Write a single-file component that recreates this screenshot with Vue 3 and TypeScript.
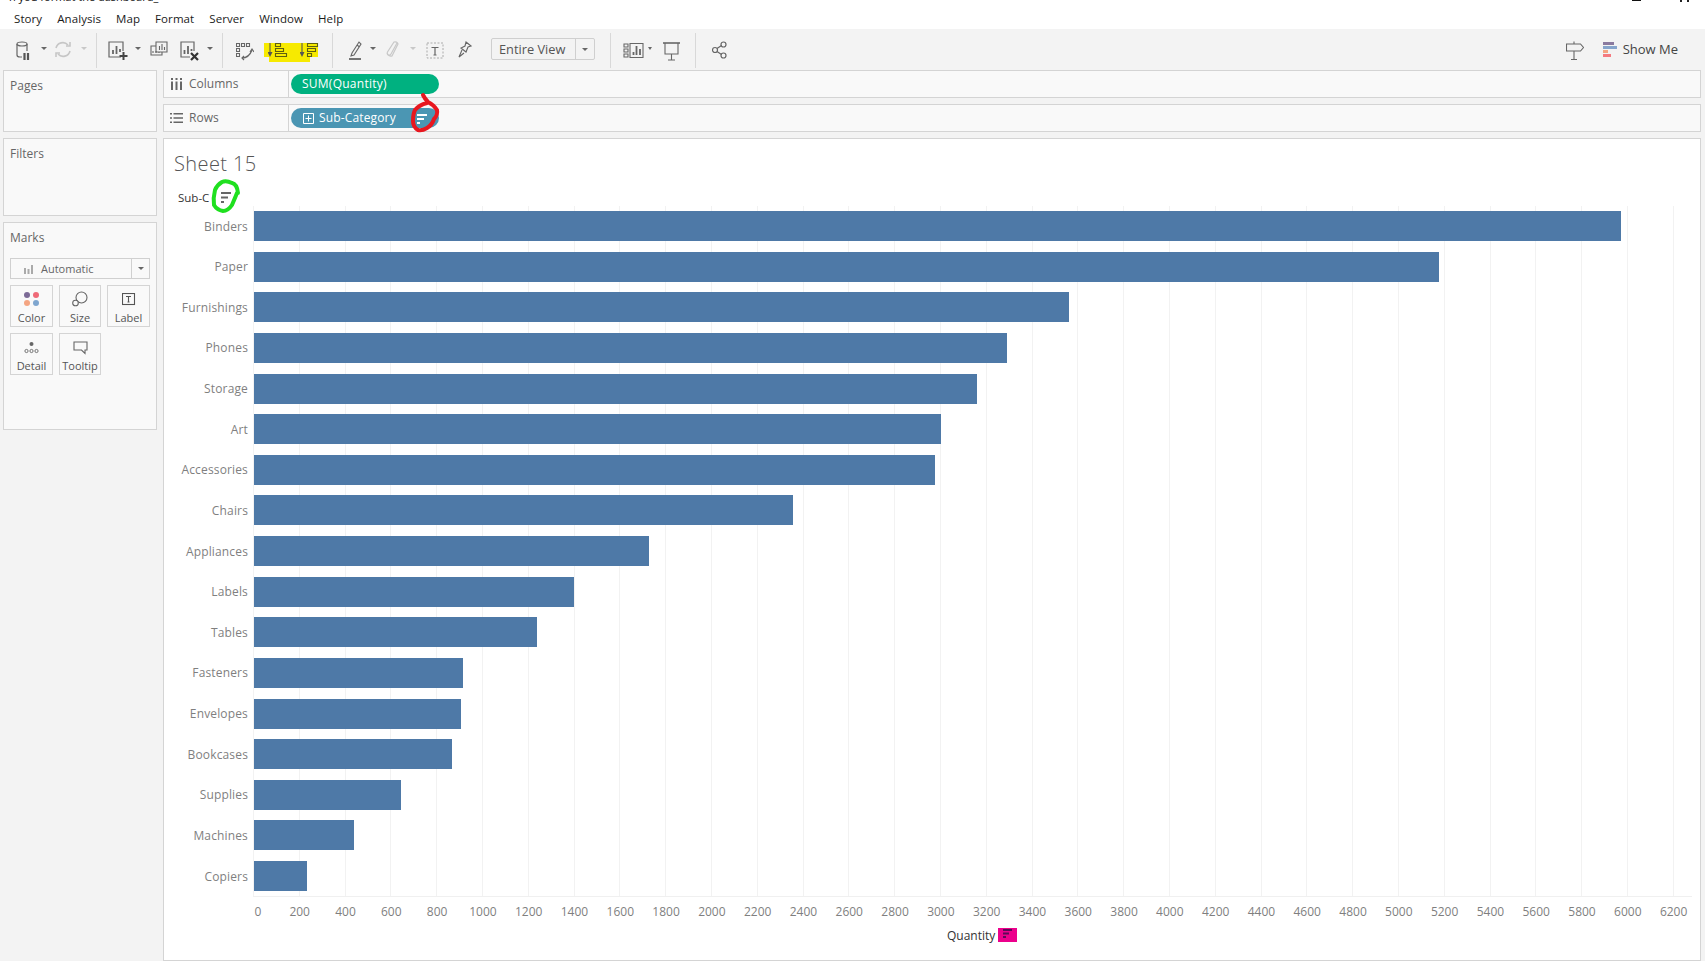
<script setup lang="ts">
interface Row { name: string; value: number }
const rows: Row[] = [
  { name: 'Binders', value: 5974 },
  { name: 'Paper', value: 5178 },
  { name: 'Furnishings', value: 3563 },
  { name: 'Phones', value: 3289 },
  { name: 'Storage', value: 3158 },
  { name: 'Art', value: 3000 },
  { name: 'Accessories', value: 2976 },
  { name: 'Chairs', value: 2356 },
  { name: 'Appliances', value: 1725 },
  { name: 'Labels', value: 1400 },
  { name: 'Tables', value: 1238 },
  { name: 'Fasteners', value: 914 },
  { name: 'Envelopes', value: 906 },
  { name: 'Bookcases', value: 866 },
  { name: 'Supplies', value: 642 },
  { name: 'Machines', value: 437 },
  { name: 'Copiers', value: 231 },
]
const pxPerUnit = 0.22885
const ticks: number[] = Array.from({ length: 32 }, (_, i) => i * 200)
const barWidth = (v: number): string => `${(v * pxPerUnit).toFixed(1)}px`
const menu: string[] = ['Story', 'Analysis', 'Map', 'Format', 'Server', 'Window', 'Help']
</script>

<template>
  <div class="app">
    <div class="titlebar">
      <span class="doc-title">n you format the dashboard_</span>
      <span class="win-min"></span>
      <svg class="win-close" width="10" height="2" viewBox="0 0 10 2"><path d="M0 0h2v2H0zM7 0h2v2H7z" fill="#222" /></svg>
    </div>
    <nav class="menubar">
      <span v-for="m in menu" :key="m">{{ m }}</span>
    </nav>

    <div class="toolbar">
      <svg class="i" width="16" height="24" viewBox="0 0 16 24" fill="none" stroke="#666" stroke-width="1.2">
        <ellipse cx="6" cy="6" rx="5" ry="2" />
        <path d="M1 6v11q0 2 3 2h2M11 6v7" />
        <path d="M8.5 15v7M12 15v7" stroke-width="2.2" stroke="#555" />
      </svg>
      <span class="caret g9"></span>
      <svg class="i g7" width="18" height="24" viewBox="0 0 18 24" fill="none" stroke="#c6c6c6" stroke-width="1.6">
        <path d="M2 10a7 7 0 0 1 12-3M16 13a7 7 0 0 1-12 3" />
        <path d="M12 8h4V4M6 15H2v4" />
      </svg>
      <span class="caret light g9"></span>
      <span class="sep g9"></span>

      <svg class="i g11" width="20" height="24" viewBox="0 0 20 24" fill="none" stroke="#666" stroke-width="1.2">
        <path d="M13 19H1V4h14v9" />
        <path d="M5 16v-4M8.5 16V8M12 14v-3" stroke-width="1.8" />
        <path d="M15.500 14v8M11.500 18h8" stroke="#444" stroke-width="2" />
      </svg>
      <span class="caret g7"></span>
      <svg class="i g9" width="18" height="24" viewBox="0 0 18 24" fill="none" stroke="#666" stroke-width="1.1">
        <path d="M6 4h11v10H6zM6 8H1v9h11v-3" />
        <path d="M9.500 12V8M12 12V6M14.500 12V9M3 15v-2M6 15v-2M9 15v-1" />
      </svg>
      <svg class="i g12" width="19" height="24" viewBox="0 0 19 24" fill="none" stroke="#666" stroke-width="1.2">
        <path d="M10 19H1V4h13v9" />
        <path d="M4.500 16v-4M8 16V8M11.500 13v-2" stroke-width="1.800" />
        <path d="M11 15l7 7M18 15l-7 7" stroke="#333" stroke-width="2.200" />
      </svg>
      <span class="caret g8"></span>
      <span class="sep g9"></span>

      <svg class="i g13" width="18" height="24" viewBox="0 0 18 24" fill="none" stroke="#666" stroke-width="1.1">
        <path d="M.5 5.500h3v3h-3zM5.500 5.500h3v3h-3zM10.500 5.500h3v3h-3zM.5 10.500h3v3h-3zM.5 15.500h3v3h-3z" />
        <path d="M6 20q7 0 10-8" stroke-width="1.300" />
        <path d="M14 14l2-3 2 3M8 18l-2 2 2 2" stroke-width="1.200" />
      </svg>
      <div class="sort-group">
        <svg class="hl" width="56" height="20" viewBox="0 0 56 20"><path d="M0 0h54v14h-8v5H5v-5H0z" fill="#f7ea00" /></svg>
        <svg class="i sort" width="20" height="24" viewBox="0 0 20 24" fill="none" stroke="#5f5f10" stroke-width="1.100">
          <path d="M2 5v10" stroke="#555" />
          <path d="M-.5 14h5L2 19z" fill="#555" stroke="none" />
          <path d="M7.500 5.500h5v3h-5zM7.500 10.500h8v3h-8zM7.500 15.500h11v3h-11z" />
        </svg>
        <svg class="i sort g12" width="20" height="24" viewBox="0 0 20 24" fill="none" stroke="#5f5f10" stroke-width="1.100">
          <path d="M2 5v10" stroke="#555" />
          <path d="M-.5 14h5L2 19z" fill="#555" stroke="none" />
          <path d="M7.500 5.500h10v3h-10zM7.500 10.500h8v3h-8zM7.500 15.500h4v3h-4z" />
        </svg>
      </div>
      <span class="sep g12"></span>

      <svg class="i g16" width="13" height="24" viewBox="0 0 13 24" fill="none" stroke="#666" stroke-width="1.100">
        <path d="M3 15l-1 3 3-1 7-11-2-2zM8 7l2.500 2" />
        <path d="M0 21h12" stroke-width="1.800" />
      </svg>
      <span class="caret g8"></span>
      <svg class="i g10" width="13" height="24" viewBox="0 0 13 24" fill="none" stroke="#c8c8c8" stroke-width="1.200">
        <path d="M11 5l-6 11a2 2 0 0 1-3.500-2L8 4a3 3 0 0 1 4 2L6 18a4 4 0 0 1-5-3" />
      </svg>
      <span class="caret light g11"></span>
      <svg class="i g10" width="18" height="24" viewBox="0 0 18 24" fill="none">
        <rect x="1" y="5" width="16" height="15" stroke="#aaa" stroke-dasharray="2 1.500" />
        <path d="M5.500 9.500h7M9 9.500v7.500M7.500 17h3" stroke="#666" stroke-width="1.200" />
      </svg>
      <svg class="i g14" width="14" height="24" viewBox="0 0 14 24" fill="none" stroke="#666" stroke-width="1.100">
        <path d="M8 4l5 4-3 1-2 5-5-4 4-2zM4 12l-3 7 5-4" />
      </svg>

      <div class="zoom-select">
        <span class="zs-text">Entire View</span>
        <span class="zs-arrow"><span class="caret dark"></span></span>
      </div>
      <span class="sep g15"></span>

      <svg class="i g12" width="21" height="24" viewBox="0 0 21 24" fill="none" stroke="#666" stroke-width="1.100">
        <path d="M1 6h4v3H1zM1 11h4v3H1zM1 16h4v3H1zM7 5.500h13v14H7z" />
        <path d="M10.500 17v-3M13.500 17V8M17 17v-6" stroke-width="1.800" />
      </svg>
      <span class="caret small g4"></span>
      <svg class="i g11" width="18" height="24" viewBox="0 0 18 24" fill="none" stroke="#666" stroke-width="1.100">
        <path d="M0 5h17" stroke-width="1.600" />
        <path d="M2 5v11h13V5M8.500 16v6M5 22h7" />
      </svg>
      <span class="sep g14"></span>

      <svg class="i g16" width="15" height="24" viewBox="0 0 15 24" fill="none" stroke="#666" stroke-width="1.200">
        <circle cx="3" cy="12" r="2.500" /><circle cx="11.500" cy="6.500" r="2.500" /><circle cx="11.500" cy="17.500" r="2.500" />
        <path d="M5 10.500l4.500-3M5 13.500l4.500 3" />
      </svg>

      <div class="toolbar-right">
        <svg class="i" width="18" height="24" viewBox="0 0 18 24" fill="none" stroke="#666" stroke-width="1.100">
          <path d="M.5 6h14l3 3.500-3 3.500H.5zM8 3.500V6M8 13v9M5 21.500h6" />
        </svg>
        <svg class="i g19" width="14" height="24" viewBox="0 0 14 24">
          <rect x="0" y="4" width="11" height="3" fill="#8a7a9f" />
          <rect x="0" y="8" width="14" height="3" fill="#86a5cc" />
          <rect x="0" y="12" width="5" height="3" fill="#f4a582" />
          <rect x="0" y="16" width="8" height="3" fill="#f47a80" />
        </svg>
        <span class="showme">Show Me</span>
      </div>
    </div>

    <div class="body">
      <aside class="side">
        <section class="panel pages"><h3>Pages</h3></section>
        <section class="panel filters"><h3>Filters</h3></section>
        <section class="panel marks">
          <h3>Marks</h3>
          <div class="marks-select">
            <svg width="11" height="12" viewBox="0 0 11 12"><path d="M1 5h2v6H1zM4.500 6h2v5h-2zM8 2h2v9H8z" fill="#aaa" /></svg>
            <span class="ms-text">Automatic</span>
            <span class="ms-arrow"><span class="caret dark"></span></span>
          </div>
          <div class="mark-grid">
            <div class="mark-card">
              <svg width="18" height="16" viewBox="0 0 18 16">
                <circle cx="4" cy="4" r="3" fill="#7c6a96" /><circle cx="13" cy="4" r="3" fill="#ef6a78" />
                <circle cx="4" cy="12" r="3" fill="#f4a582" /><circle cx="13" cy="12" r="3" fill="#7fa6cf" />
              </svg>
              <span>Color</span>
            </div>
            <div class="mark-card">
              <svg width="16" height="16" viewBox="0 0 16 16" fill="none" stroke="#666" stroke-width="1.100">
                <circle cx="9.500" cy="6.500" r="5.500" /><circle cx="3.500" cy="12" r="2.800" fill="#f9f9f9" />
              </svg>
              <span>Size</span>
            </div>
            <div class="mark-card">
              <svg width="14" height="14" viewBox="0 0 14 14" fill="none" stroke="#555" stroke-width="1.100">
                <rect x=".5" y=".5" width="12" height="11" />
                <path d="M4 3.500h5M6.500 3.500v5.500M5.500 9h2" />
              </svg>
              <span>Label</span>
            </div>
            <div class="mark-card">
              <svg width="15" height="14" viewBox="0 0 15 14" fill="none" stroke="#666" stroke-width=".9">
                <circle cx="7.500" cy="3" r="2" fill="#666" stroke="none" />
                <circle cx="2.500" cy="10" r="1.600" /><circle cx="7.500" cy="10" r="1.600" /><circle cx="12.500" cy="10" r="1.600" />
              </svg>
              <span>Detail</span>
            </div>
            <div class="mark-card">
              <svg width="15" height="14" viewBox="0 0 15 14" fill="none" stroke="#666" stroke-width="1.100">
                <path d="M1 1h13v8h-2v3.500L8.500 9H1z" />
              </svg>
              <span>Tooltip</span>
            </div>
          </div>
        </section>
      </aside>

      <main class="content">
        <div class="shelf">
          <div class="shelf-label">
            <svg width="13" height="12" viewBox="0 0 13 12"><path d="M1 0h2v2H1zM1 3.500h2V12H1zM5.500 0h2v2h-2zM5.500 3.500h2V12h-2zM10 0h2v2h-2zM10 3.500h2V12h-2z" fill="#666" /></svg>
            <span>Columns</span>
          </div>
          <div class="pill green"><span class="pill-text">SUM(Quantity)</span></div>
        </div>
        <div class="shelf">
          <div class="shelf-label">
            <svg width="13" height="12" viewBox="0 0 13 12"><path d="M0 1h2v1.600H0zM3.500 1H13v1.600H3.500zM0 5.200h2v1.600H0zM3.500 5.200H13v1.600H3.500zM0 9.400h2V11H0zM3.500 9.400H13V11H3.500z" fill="#666" /></svg>
            <span>Rows</span>
          </div>
          <div class="pill blue">
            <svg width="11" height="11" viewBox="0 0 11 11" fill="none" stroke="#fff"><path d="M.5.500h10v10H.5zM5.500 2.500v6M2.500 5.500h6" /></svg>
            <span class="pill-text narrow">Sub-Category</span>
            <svg class="pill-sort" width="10" height="10" viewBox="0 0 10 10" fill="#fff"><path d="M0 0h10v2H0zM0 4h7v2H0zM0 8h3v2H0z" /></svg>
          </div>
        </div>

        <section class="sheet">
          <h1 class="sheet-title">Sheet 15</h1>
          <div class="row-header">
            <span>Sub-C</span>
            <svg width="10" height="11" viewBox="0 0 10 11" fill="#666"><path d="M0 0h10v2H0zM0 4.500h7v2H0zM0 9h3v2H0z" /></svg>
          </div>
          <div class="plot">
            <div class="grid">
              <span v-for="t in ticks" :key="t" class="grid-line"></span>
            </div>
            <div v-for="r in rows" :key="r.name" class="row">
              <span class="row-name">{{ r.name }}</span>
              <span class="bar" :style="{ width: barWidth(r.value) }"></span>
            </div>
          </div>
          <div class="ticks">
            <span v-for="t in ticks" :key="t" class="tick" :class="{ first: t === 0 }">{{ t }}</span>
          </div>
          <div class="axis-title">
            <span>Quantity</span>
            <span class="axis-sort">
              <svg width="9" height="9" viewBox="0 0 9 9" fill="#5c0a58"><path d="M0 0h9v2H0zM0 3.500h6v2H0zM0 7h3v2H0z" /></svg>
            </span>
          </div>
        </section>
      </main>
    </div>

    <svg class="scribbles" width="1705" height="961" viewBox="0 0 1705 961" fill="none" stroke-linecap="round" stroke-linejoin="round">
      <path d="M423 95q2 4 5 7 6 3 9 8 1 5-3 9-2 6-7 9-5 3-9 2-5-3-5-9 0-7 2-11 4-5 12-7" stroke="#e8171f" stroke-width="4" />
      <path d="M238 193q-1-9-6-10-6-3-10-1-5 3-7 8-2 8-1 15 3 5 9 6 5 0 9-6 3-7 5-12" stroke="#1fe01f" stroke-width="4" />
    </svg>
  </div>
</template>

<style>
html, body { margin: 0; padding: 0; background: #f3f3f3; }
</style>

<style scoped>
.app {
  position: relative;
  width: 1705px;
  height: 961px;
  overflow: hidden;
  display: flex;
  flex-direction: column;
  background: #f3f3f3;
  font-family: "Open Sans", "Noto Sans", sans-serif;
  font-size: 12px;
  color: #555;
}
.titlebar {
  position: relative;
  height: 8px;
  flex: none;
  background: #fff;
  overflow: hidden;
}
.doc-title {
  display: block;
  margin-top: -12px;
  padding-left: 9px;
  font-size: 11px;
  line-height: 18px;
  color: #111;
  white-space: nowrap;
}
.win-min {
  position: absolute;
  left: 1632px;
  top: 0;
  width: 9px;
  height: 1px;
  background: #111;
}
.win-close {
  position: absolute;
  left: 1680px;
  top: 0;
}
.menubar {
  height: 21px;
  flex: none;
  display: flex;
  align-items: center;
  gap: 15px;
  padding-left: 14px;
  background: #fff;
  color: #1a1a1a;
  font-size: 11.5px;
  letter-spacing: .08px;
}
.toolbar {
  height: 41px;
  flex: none;
  box-sizing: border-box;
  display: flex;
  align-items: flex-start;
  padding: 9px 27px 0 16px;
}
.i { flex: none; display: block; }
.caret {
  flex: none;
  width: 0;
  height: 0;
  margin-top: 9px;
  border-left: 3px solid transparent;
  border-right: 3px solid transparent;
  border-top: 3px solid #666;
}
.caret.light { border-top-color: #c8c8c8; }
.caret.small { border-left-width: 2.5px; border-right-width: 2.5px; }
.caret.dark { margin-top: 0; border-top-color: #666; }
.sep {
  flex: none;
  width: 1px;
  height: 35px;
  margin-top: -5px;
  background: #d8d8d8;
}
.g4 { margin-left: 4px; }
.g7 { margin-left: 7px; }
.g8 { margin-left: 8px; }
.g9 { margin-left: 9px; }
.g10 { margin-left: 10px; }
.g11 { margin-left: 11px; }
.g12 { margin-left: 12px; }
.g13 { margin-left: 13px; }
.g14 { margin-left: 14px; }
.g15 { margin-left: 15px; }
.g16 { margin-left: 16px; }
.g19 { margin-left: 19px; }
.sort-group {
  position: relative;
  display: flex;
  margin-left: 14px;
}
.hl { position: absolute; left: -4px; top: 5px; }
.sort { position: relative; }
.zoom-select {
  flex: none;
  margin-left: 19px;
  width: 104px;
  height: 22px;
  box-sizing: border-box;
  display: flex;
  align-items: center;
  border: 1px solid #cfcfcf;
  border-radius: 2px;
  font-size: 12.800px;
  color: #555;
}
.zs-text { flex: 1; padding-left: 7px; white-space: nowrap; }
.zs-arrow {
  width: 18px;
  height: 100%;
  display: flex;
  align-items: center;
  justify-content: center;
  border-left: 1px solid #cfcfcf;
}
.toolbar-right {
  margin-left: auto;
  display: flex;
  align-items: flex-start;
}
.showme {
  margin-left: 6px;
  margin-top: 2px;
  font-size: 13px;
  line-height: 18px;
  color: #444;
  white-space: nowrap;
}
.body {
  flex: 1;
  min-height: 0;
  display: flex;
  gap: 6px;
  padding-left: 3px;
  padding-right: 4px;
}
.side {
  flex: none;
  width: 154px;
  display: flex;
  flex-direction: column;
  gap: 6px;
}
.panel {
  box-sizing: border-box;
  border: 1px solid #d4d4d4;
  background: #f9f9f9;
  padding: 7px 6px;
}
.panel h3 {
  margin: 0;
  font-size: 12px;
  font-weight: 400;
  line-height: 16px;
  color: #666;
}
.pages { height: 62px; }
.filters { height: 78px; }
.marks { height: 208px; }
.marks-select {
  margin-top: 12px;
  height: 21px;
  box-sizing: border-box;
  display: flex;
  align-items: center;
  border: 1px solid #d0d0d0;
  padding-left: 12px;
  font-size: 11px;
  color: #666;
}
.ms-text { flex: 1; margin-left: 7px; }
.ms-arrow {
  width: 17px;
  height: 100%;
  display: flex;
  align-items: center;
  justify-content: center;
  border-left: 1px solid #d0d0d0;
}
.mark-grid {
  margin-top: 6px;
  display: grid;
  grid-template-columns: 43px 42px 43px;
  column-gap: 6px;
  row-gap: 6px;
}
.mark-card {
  height: 42px;
  box-sizing: border-box;
  border: 1px solid #d4d4d4;
  display: flex;
  flex-direction: column;
  align-items: center;
  justify-content: flex-end;
  gap: 3px;
  padding-bottom: 1px;
  font-size: 11px;
  line-height: 15px;
  color: #555;
}
.content {
  flex: 1;
  min-width: 0;
  display: flex;
  flex-direction: column;
  gap: 6px;
}
.shelf {
  height: 28px;
  flex: none;
  box-sizing: border-box;
  display: flex;
  align-items: center;
  border: 1px solid #d4d4d4;
  background: #f9f9f9;
}
.shelf-label {
  flex: none;
  width: 125px;
  height: 100%;
  box-sizing: border-box;
  display: flex;
  align-items: center;
  gap: 6px;
  padding: 0 0 1px 6px;
  border-right: 1px solid #d4d4d4;
  color: #666;
  font-size: 12px;
}
.pill {
  flex: none;
  margin-left: 2px;
  width: 148px;
  height: 20px;
  box-sizing: border-box;
  display: flex;
  align-items: center;
  border-radius: 10px;
  color: #fff;
  font-size: 12px;
  white-space: nowrap;
}
.pill-text { letter-spacing: .25px; margin-top: -1px; }
.pill-text.narrow { letter-spacing: .15px; }
.pill.green { background: #00b180; padding-left: 11px; }
.pill.blue { background: #4b96b3; padding-left: 12px; gap: 5px; position: relative; }
.pill-sort { position: absolute; right: 12px; top: 6px; }
.sheet {
  flex: 1;
  min-height: 0;
  box-sizing: border-box;
  border: 1px solid #d4d4d4;
  background: #fff;
}
.sheet-title {
  margin: 0;
  height: 50px;
  padding-left: 10px;
  font-size: 20px;
  font-weight: 300;
  letter-spacing: .4px;
  line-height: 50px;
  color: #555;
}
.row-header {
  height: 17px;
  display: flex;
  align-items: center;
  gap: 12px;
  padding-left: 14px;
  font-size: 11.500px;
  font-weight: 500;
  color: #333;
}
.plot {
  position: relative;
  height: 691px;
  box-sizing: border-box;
  padding-top: 5px;
  display: flex;
  flex-direction: column;
  gap: 10.625px;
  margin-right: 8px;
}
.grid {
  position: absolute;
  left: 89px;
  right: 0;
  top: 0;
  bottom: 0;
  display: flex;
  overflow: hidden;
  border-bottom: 1px solid #f0f0f0;
}
.grid-line {
  flex: 0 0 45.810px;
  box-sizing: border-box;
  border-left: 1px solid #f2f2f2;
}
.row {
  position: relative;
  height: 30px;
  flex: none;
  display: flex;
  align-items: center;
}
.row-name {
  flex: none;
  width: 84px;
  margin-right: 6px;
  text-align: right;
  font-size: 12px;
  letter-spacing: .15px;
  color: #7f7f7f;
  white-space: nowrap;
}
.bar {
  display: block;
  height: 100%;
  background: #4e79a7;
}
.ticks {
  display: flex;
  margin-left: 67px;
  height: 29px;
  align-items: center;
}
.tick {
  flex: 0 0 45.810px;
  text-align: center;
  font-size: 12px;
  color: #7f7f7f;
}
.tick.first { padding-left: 8px; box-sizing: border-box; }
.axis-title {
  margin: 1px 0 0 783px;
  height: 16px;
  display: flex;
  align-items: center;
  gap: 3px;
  font-size: 12px;
  color: #333;
}
.axis-sort {
  width: 19px;
  height: 14px;
  display: flex;
  align-items: flex-start;
  justify-content: center;
  padding-top: 1px;
  box-sizing: border-box;
  background: #ec008c;
}
.scribbles {
  position: absolute;
  left: 0;
  top: 0;
  pointer-events: none;
}
</style>
